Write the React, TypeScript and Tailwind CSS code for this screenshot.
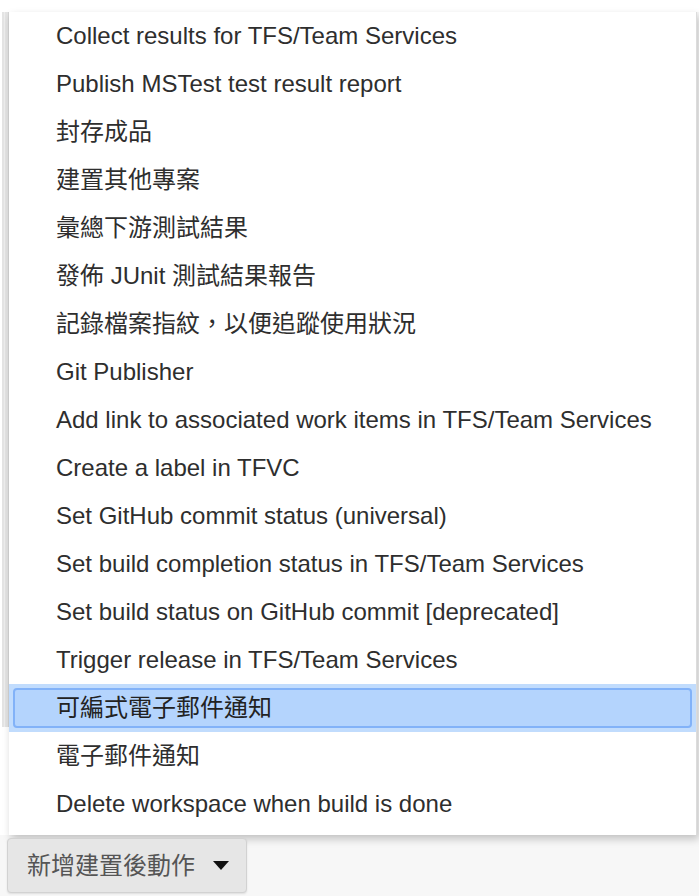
const items = [
  "Collect results for TFS/Team Services",
  "Publish MSTest test result report",
  "封存成品",
  "建置其他專案",
  "彙總下游測試結果",
  "發佈 JUnit 測試結果報告",
  "記錄檔案指紋，以便追蹤使用狀況",
  "Git Publisher",
  "Add link to associated work items in TFS/Team Services",
  "Create a label in TFVC",
  "Set GitHub commit status (universal)",
  "Set build completion status in TFS/Team Services",
  "Set build status on GitHub commit [deprecated]",
  "Trigger release in TFS/Team Services",
  "可編式電子郵件通知",
  "電子郵件通知",
  "Delete workspace when build is done",
];

const ACTIVE = 14;

export default function App() {
  return (
    <div
      className="w-[699px] h-[896px] overflow-hidden bg-[#f7f7f7] text-[#2e2e2e] flex flex-col"
      style={{ fontFamily: '"Liberation Sans", Arial, "Noto Sans CJK TC", sans-serif' }}
    >
      <div className="h-[12px] bg-white shrink-0" />

      <div className="flex">
        {/* page behind the menu, left edge */}
        <div className="w-[9px] flex flex-col">
          <div className="h-[715px] bg-[#e4e4e4] border-l-2 border-white border-r border-r-[#d6d6d6] flex">
            <div className="ml-[2px] w-px bg-[#eeeeee]" />
          </div>
          <div className="flex-1 bg-white" />
        </div>

        {/* dropdown menu */}
        <div className="w-[688px] bg-white pb-[7px] border-r border-[#dcdcdc] shadow-[2px_4px_8px_rgba(0,0,0,0.22)] flex flex-col">
          {items.map((label, i) =>
            i === ACTIVE ? (
              <div key={i} className="h-[48px] bg-[#c1dcfd] p-[4px]">
                <div className="h-full flex items-center pl-[41px] rounded-[4px] border-2 border-[#82b2f8] bg-[#b4d4fd] text-[24px] text-[#222]">
                  {label}
                </div>
              </div>
            ) : (
              <div key={i} className="h-[48px] flex items-center pl-[47px] text-[24px] whitespace-nowrap">
                {label}
              </div>
            )
          )}
        </div>
      </div>

      {/* add post-build action button */}
      <div className="ml-[7px] mt-[3px] w-[240px] h-[55px] flex items-center pl-[19px] gap-[18px] bg-[#e6e6e6] border border-[#d2d2d2] rounded-[4px] shadow-[0_1px_2px_rgba(0,0,0,0.1)]">
        <span className="text-[24px] text-[#555]">新增建置後動作</span>
        <svg width="16" height="9" viewBox="0 0 16 9">
          <path d="M0 0h16L8 9z" fill="#111" />
        </svg>
      </div>
    </div>
  );
}
